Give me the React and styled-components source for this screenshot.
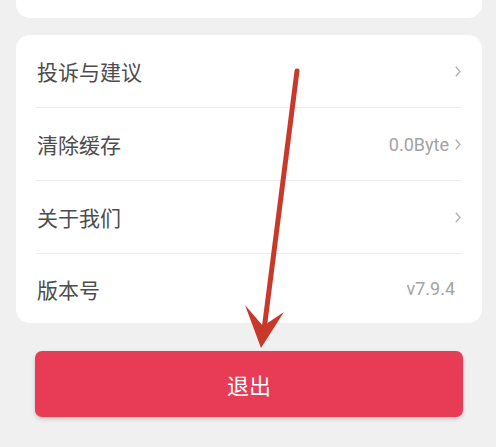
import React from "react";
import styled, { createGlobalStyle } from "styled-components";

const Global = createGlobalStyle`
    html, body {
        margin: 0;
        padding: 0;
        background: #f0f0f0;
        font-family: Roboto, "Noto Sans CJK SC", sans-serif;
    }
`;

const Page = styled.div`
    position: relative;
    width: 496px;
    height: 447px;
    overflow: hidden;
    padding: 0 14px 0 16px;
    box-sizing: border-box;
    display: flex;
    flex-direction: column;
`;

const TopCard = styled.div`
    height: 60px;
    margin-top: -42px;
    background: #fff;
    border-radius: 14px;
`;

const Card = styled.div`
    margin-top: 17px;
    background: #fff;
    border-radius: 14px;
    padding: 0 20px 0 20px;
`;

const Row = styled.div`
    height: ${props => props.last ? "69px" : "72px"};
    display: flex;
    align-items: center;
    justify-content: space-between;
    border-bottom: ${props => props.last ? "none" : "1px solid #ececec"};
    padding-left: 1px;
`;

const Label = styled.span`
    font-size: 21px;
    color: #4d4d4d;
    font-family: "Noto Sans CJK SC", sans-serif;
`;

const Right = styled.span`
    display: flex;
    align-items: center;
    gap: 6px;
    font-size: 18px;
    color: #a3a3a3;
    padding-right: ${props => props.plain ? "7px" : "1px"};
`;

const Chevron = () => (
    <svg width="6" height="11" viewBox="0 0 6 11">
        <path d="M0.8 0.8 L5 5.5 L0.8 10.2" fill="none" stroke="#b0b0b0" strokeWidth="1.3" />
    </svg>
);

const Logout = styled.button`
    margin: 28px 19px 0 19px;
    height: 66px;
    border: none;
    border-radius: 7px;
    background: #e73b56;
    color: #fff;
    font-size: 22px;
    font-family: "Noto Sans CJK SC", sans-serif;
    box-shadow: 0 2px 4px rgba(0, 0, 0, 0.18);
`;

const Arrow = styled.svg`
    position: absolute;
    left: 0;
    top: 0;
    pointer-events: none;
`;

const rows = [
    { label: "投诉与建议", value: "", chevron: true },
    { label: "清除缓存", value: "0.0Byte", chevron: true },
    { label: "关于我们", value: "", chevron: true },
    { label: "版本号", value: "v7.9.4", chevron: false },
];

export default function App() {
    return (
        <Page>
            <Global />
            <TopCard />
            <Card>
                {rows.map((r, i) => (
                    <Row key={r.label} last={i === rows.length - 1}>
                        <Label>{r.label}</Label>
                        <Right plain={!r.chevron}>
                            {r.value}
                            {r.chevron && <Chevron />}
                        </Right>
                    </Row>
                ))}
            </Card>
            <Logout>退出</Logout>
            <Arrow width="496" height="447">
                <line x1="297" y1="71" x2="264" y2="330" stroke="#c9392b" strokeWidth="5" strokeLinecap="round" />
                <path d="M245 305 L263 326 L284 312 L261 348 Z" fill="#c9392b" />
            </Arrow>
        </Page>
    );
}
